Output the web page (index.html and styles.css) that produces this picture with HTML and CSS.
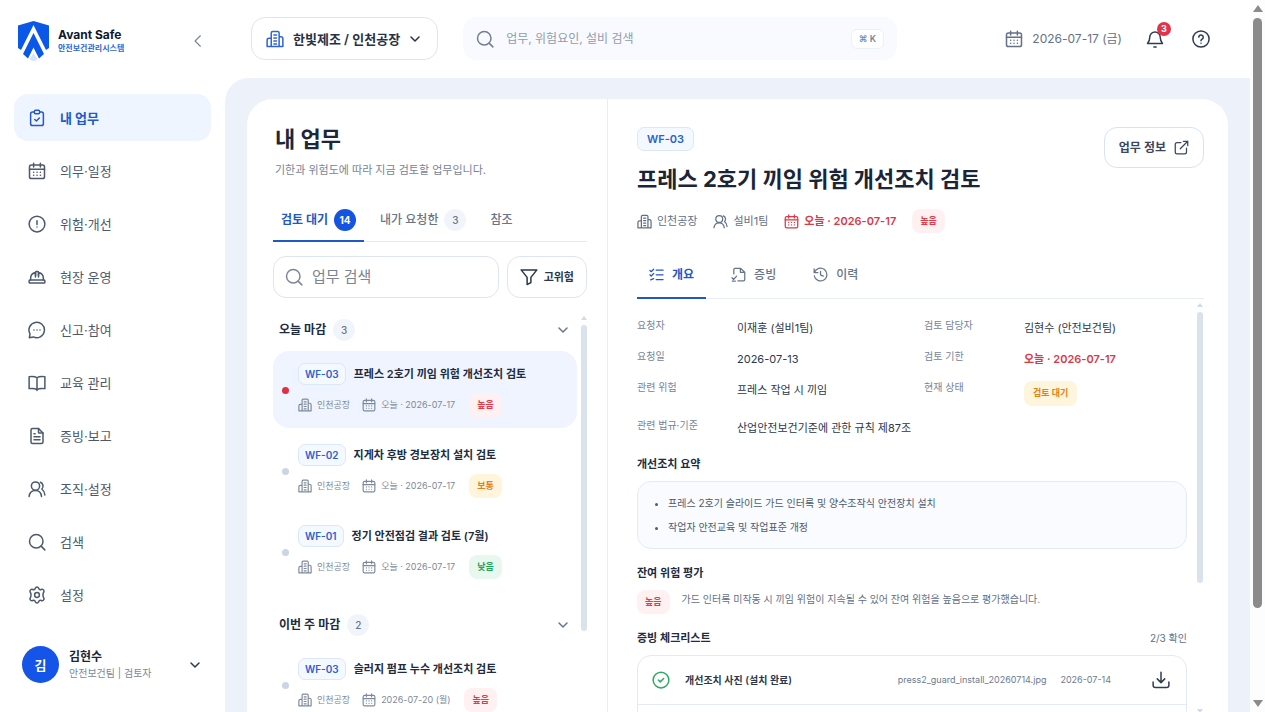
FILE: index.html
```html
<!DOCTYPE html>
<html lang="ko">
<head>
    <meta charset="UTF-8">
    <meta name="viewport" content="width=device-width, initial-scale=1.0">
    <title>Avant Safe - 내 업무</title>
    <link rel="stylesheet" href="styles.css">
</head>
<body>

    <!-- icon set -->
    <svg class="sprite" aria-hidden="true">
        <symbol id="i-clipboard" viewBox="0 0 24 24"><path d="M8.500 4H6a2.500 2.500 0 0 0-2.500 2.500v13A2.500 2.500 0 0 0 6 22h12a2.500 2.500 0 0 0 2.500-2.500v-13A2.500 2.500 0 0 0 18 4h-2.500"/><rect x="8.500" y="1.800" width="7" height="4.500" rx="1.500"/><path d="M9 14l2.200 2 4-4"/></symbol>
        <symbol id="i-calendar" viewBox="0 0 24 24"><rect x="2" y="4" width="20" height="18" rx="2.500"/><path d="M7.500 1.500v5M16.500 1.500v5M2 9.500h20"/><path d="M7.500 13.500h.1M12 13.500h.1M16.500 13.500h.1M7.500 17.500h.1M12 17.500h.1M16.500 17.500h.1"/></symbol>
        <symbol id="i-alert" viewBox="0 0 24 24"><circle cx="12" cy="12" r="10.500"/><path d="M12 7.500v5M12 16h.01"/></symbol>
        <symbol id="i-helmet" viewBox="0 0 24 24"><path d="M3.500 16v-2a8 8 0 0 1 6.500-8v6M14 12V6a8 8 0 0 1 6.500 8v2"/><path d="M10 10V5.500a1 1 0 0 1 1-1h2a1 1 0 0 1 1 1V10"/><rect x="1.500" y="16" width="21" height="4" rx="1"/></symbol>
        <symbol id="i-message" viewBox="0 0 24 24"><path d="M1.800 22.200l.9-5A10.300 10.300 0 1 1 7 21.200z"/><path d="M8 12h.01M12 12h.01M16 12h.01"/></symbol>
        <symbol id="i-book" viewBox="0 0 24 24"><path d="M12 5C9.500 3 6 3 1.500 3.500V19.500c4.500-.5 8-.5 10.500 1.500 2.500-2 6-2 10.500-1.500V3.500C18 3 14.500 3 12 5zM12 5v17"/></symbol>
        <symbol id="i-file" viewBox="0 0 24 24"><path d="M14 2v5a1 1 0 0 0 1 1h5"/><path d="M18 22H6a2 2 0 0 1-2-2V4a2 2 0 0 1 2-2h8l6 6v12a2 2 0 0 1-2 2zM8 9h1.500M8 13h8M8 17h8"/></symbol>
        <symbol id="i-users" viewBox="0 0 24 24"><circle cx="10" cy="8" r="5.500"/><path d="M1.500 22c.5-5 4-8 8.500-8s7.500 3 8 8M16.500 3a5.500 5.500 0 0 1 2 9c2.500 2 3.800 4.500 4 8"/></symbol>
        <symbol id="i-search" viewBox="0 0 24 24"><circle cx="11" cy="11" r="9"/><path d="M22.500 22.500L17.500 17.500"/></symbol>
        <symbol id="i-gear" viewBox="0 0 24 24"><path d="M9.800 2.900c.7-2 3.700-2 4.400 0 .5 1.700 1.900 2.400 3.500 1.700 2.100-.9 4 .9 3.600 2.800-.2.800-.9 1.400-1 2.300-.4 1.500-.4 3.100 0 4.600.1.900.8 1.500 1 2.300.4 1.900-1.500 3.700-3.600 2.800-1.600-.7-3 0-3.500 1.700-.7 2-3.700 2-4.400 0-.5-1.700-1.900-2.400-3.500-1.700-2.100.9-4-.9-3.600-2.800.2-.8.900-1.400 1-2.300.4-1.500.4-3.100 0-4.600-.1-.9-.8-1.500-1-2.300-.4-1.900 1.500-3.700 3.600-2.800 1.600.7 3 0 3.500-1.700z"/><circle cx="12" cy="12" r="3.200"/></symbol>
        <symbol id="i-down" viewBox="0 0 24 24"><path d="M4 8l8 8 8-8"/></symbol>
        <symbol id="i-left" viewBox="0 0 24 24"><path d="M16 3l-9 9 9 9"/></symbol>
        <symbol id="i-building" viewBox="0 0 24 24"><path d="M7 22V4a2 2 0 0 1 2-2h6.500a2 2 0 0 1 2 2v18M7 11H4a2.500 2.500 0 0 0-2.500 2.500V22h21V11.500A2.500 2.500 0 0 0 20 9h-2.500M10.500 6.500h3.500M10.500 10.500h3.500M10.500 14.500h3.500M10.500 18.500h3.500"/></symbol>
        <symbol id="i-bell" viewBox="0 0 24 24"><path d="M12 2.500a7 7 0 0 0-7 7c0 4-1 6-3 8.500h20c-2-2.500-3-4.500-3-8.500a7 7 0 0 0-7-7zM10.500 22.500h3"/></symbol>
        <symbol id="i-help" viewBox="0 0 24 24"><circle cx="12" cy="12" r="10.800"/><path d="M9 9.500a3 3 0 1 1 4.500 2.800c-1 .6-1.500 1-1.500 2M12 17.500h.01"/></symbol>
        <symbol id="i-filter" viewBox="0 0 24 24"><path d="M1.500 2.500h21L14.500 12.500v7l-5 2.500v-9.500z"/></symbol>
        <symbol id="i-open" viewBox="0 0 24 24"><path d="M11 4H5a3 3 0 0 0-3 3v12a3 3 0 0 0 3 3h12a3 3 0 0 0 3-3v-6M10 14L22 2M15 2h7v7"/></symbol>
        <symbol id="i-checks" viewBox="0 0 24 24"><path d="M1.500 5.500l2 2 4-4M1.500 12.500l2 2 4-4M2.500 20.500l5-2M11.500 5h11M11.500 12.500h11M11.500 20h11"/></symbol>
        <symbol id="i-evidence" viewBox="0 0 24 24"><path d="M4.500 11V4a2 2 0 0 1 2-2H15l7 6.500V20a2 2 0 0 1-2 2h-9M15 2v6.500h7M1.500 17l2.500 3 5-5.500"/><path d="M2 22.500h5"/></symbol>
        <symbol id="i-history" viewBox="0 0 24 24"><path d="M12 7v5.500l4.500 2M1.800 3v6h6M2.300 9a10.200 10.200 0 1 1-.3 5"/></symbol>
        <symbol id="i-done" viewBox="0 0 24 24"><circle cx="12" cy="12" r="10.500"/><path d="M8.500 12l2.500 2.500 4.500-4.500"/></symbol>
        <symbol id="i-download" viewBox="0 0 24 24"><path d="M12 1.500V15M7 10.500l5 5 5-5M1.500 14.500V19a3 3 0 0 0 3 3h15a3 3 0 0 0 3-3v-4.500"/></symbol>
    </svg>

    <div class="app">
        <aside class="sidebar">
            <div class="brand">
                <svg class="brand-logo" viewBox="0 0 31 41">
                    <path fill="#0b57e8" d="M0 4.500L15.500 0 31 4.500V27l-3 2L15.500 4 3 29l-3-2z"/>
                    <path fill="#0b57e8" d="M15.500 12L26 33l-5 4.500-5.500-11-5.500 11L5 33z"/>
                    <path fill="#d5e3fc" d="M15.500 32l4 6-4 2.500-4-2.500z"/>
                </svg>
                <div class="brand-text">
                    <strong>Avant Safe</strong>
                    <span>안전보건관리시스템</span>
                </div>
                <button class="collapse" aria-label="메뉴 접기"><svg class="icon"><use href="#i-left"/></svg></button>
            </div>

            <nav class="menu">
                <a href="#" class="active"><svg class="icon"><use href="#i-clipboard"/></svg>내 업무</a>
                <a href="#"><svg class="icon"><use href="#i-calendar"/></svg>의무·일정</a>
                <a href="#"><svg class="icon"><use href="#i-alert"/></svg>위험·개선</a>
                <a href="#"><svg class="icon"><use href="#i-helmet"/></svg>현장 운영</a>
                <a href="#"><svg class="icon"><use href="#i-message"/></svg>신고·참여</a>
                <a href="#"><svg class="icon"><use href="#i-book"/></svg>교육 관리</a>
                <a href="#"><svg class="icon"><use href="#i-file"/></svg>증빙·보고</a>
                <a href="#"><svg class="icon"><use href="#i-users"/></svg>조직·설정</a>
                <a href="#"><svg class="icon"><use href="#i-search"/></svg>검색</a>
                <a href="#"><svg class="icon"><use href="#i-gear"/></svg>설정</a>
            </nav>

            <button class="user">
                <span class="avatar">김</span>
                <span class="user-text"><strong>김현수</strong><span>안전보건팀 | 검토자</span></span>
                <svg class="icon small"><use href="#i-down"/></svg>
            </button>
        </aside>

        <div class="main">
            <header class="topbar">
                <button class="site">
                    <svg class="icon"><use href="#i-building"/></svg>
                    한빛제조 / 인천공장
                    <svg class="icon small"><use href="#i-down"/></svg>
                </button>
                <label class="global-search">
                    <svg class="icon"><use href="#i-search"/></svg>
                    <input type="text" placeholder="업무, 위험요인, 설비 검색" aria-label="전체 검색">
                    <kbd>⌘ K</kbd>
                </label>
                <div class="top-actions">
                    <span class="today"><svg class="icon"><use href="#i-calendar"/></svg>2026-07-17 (금)</span>
                    <button class="icon-btn" aria-label="알림"><svg class="icon"><use href="#i-bell"/></svg><span class="count">3</span></button>
                    <button class="icon-btn" aria-label="도움말"><svg class="icon"><use href="#i-help"/></svg></button>
                </div>
            </header>

            <main class="workspace">
                <div class="card">
                    <section class="list-panel">
                        <h1>내 업무</h1>
                        <p class="subtitle">기한과 위험도에 따라 지금 검토할 업무입니다.</p>

                        <div class="tabs">
                            <button class="active">검토 대기<span class="pill">14</span></button>
                            <button>내가 요청한<span class="pill">3</span></button>
                            <button>참조</button>
                        </div>

                        <div class="filters">
                            <label class="task-search">
                                <svg class="icon"><use href="#i-search"/></svg>
                                <input type="text" placeholder="업무 검색" aria-label="업무 검색">
                            </label>
                            <button class="filter-btn"><svg class="icon"><use href="#i-filter"/></svg>고위험</button>
                        </div>

                        <div class="scroll-area">
                            <div class="task-list">
                                <button class="group">오늘 마감<span class="pill">3</span><svg class="icon small"><use href="#i-down"/></svg></button>
                                <a href="#" class="task selected">
                                    <span class="task-title"><span class="code">WF-03</span>프레스 2호기 끼임 위험 개선조치 검토</span>
                                    <span class="task-meta"><svg class="icon mini"><use href="#i-building"/></svg><span class="place">인천공장</span><svg class="icon mini"><use href="#i-calendar"/></svg><span class="due">오늘 · 2026-07-17</span><span class="chip high">높음</span></span>
                                </a>
                                <a href="#" class="task">
                                    <span class="task-title"><span class="code">WF-02</span>지게차 후방 경보장치 설치 검토</span>
                                    <span class="task-meta"><svg class="icon mini"><use href="#i-building"/></svg><span class="place">인천공장</span><svg class="icon mini"><use href="#i-calendar"/></svg><span class="due">오늘 · 2026-07-17</span><span class="chip mid">보통</span></span>
                                </a>
                                <a href="#" class="task">
                                    <span class="task-title"><span class="code">WF-01</span>정기 안전점검 결과 검토 (7월)</span>
                                    <span class="task-meta"><svg class="icon mini"><use href="#i-building"/></svg><span class="place">인천공장</span><svg class="icon mini"><use href="#i-calendar"/></svg><span class="due">오늘 · 2026-07-17</span><span class="chip low">낮음</span></span>
                                </a>

                                <button class="group">이번 주 마감<span class="pill">2</span><svg class="icon small"><use href="#i-down"/></svg></button>
                                <a href="#" class="task">
                                    <span class="task-title"><span class="code">WF-03</span>슬러지 펌프 누수 개선조치 검토</span>
                                    <span class="task-meta"><svg class="icon mini"><use href="#i-building"/></svg><span class="place">인천공장</span><svg class="icon mini"><use href="#i-calendar"/></svg><span class="due">2026-07-20 (월)</span><span class="chip high">높음</span></span>
                                </a>
                            </div>
                            <div class="scrollbar"><i class="arrow-up"></i><i class="thumb"></i><i class="arrow-down"></i></div>
                        </div>
                    </section>

                    <section class="detail-panel">
                        <div class="detail-head">
                            <div>
                                <span class="code large">WF-03</span>
                                <h2>프레스 2호기 끼임 위험 개선조치 검토</h2>
                            </div>
                            <button class="info-btn">업무 정보<svg class="icon"><use href="#i-open"/></svg></button>
                        </div>
                        <div class="detail-meta">
                            <span><svg class="icon"><use href="#i-building"/></svg>인천공장</span>
                            <span><svg class="icon"><use href="#i-users"/></svg>설비1팀</span>
                            <span class="overdue"><svg class="icon"><use href="#i-calendar"/></svg>오늘 · 2026-07-17</span>
                            <span class="chip high">높음</span>
                        </div>

                        <div class="detail-tabs">
                            <button class="active"><svg class="icon"><use href="#i-checks"/></svg>개요</button>
                            <button><svg class="icon"><use href="#i-evidence"/></svg>증빙</button>
                            <button><svg class="icon"><use href="#i-history"/></svg>이력</button>
                        </div>

                        <div class="scroll-area">
                            <div class="detail-body">
                                <dl class="fields">
                                    <div><dt>요청자</dt><dd>이재훈 (설비1팀)</dd></div>
                                    <div><dt>검토 담당자</dt><dd>김현수 (안전보건팀)</dd></div>
                                    <div><dt>요청일</dt><dd>2026-07-13</dd></div>
                                    <div><dt>검토 기한</dt><dd class="overdue">오늘 · 2026-07-17</dd></div>
                                    <div><dt>관련 위험</dt><dd>프레스 작업 시 끼임</dd></div>
                                    <div><dt>현재 상태</dt><dd><span class="chip mid">검토 대기</span></dd></div>
                                    <div class="wide"><dt>관련 법규·기준</dt><dd>산업안전보건기준에 관한 규칙 제87조</dd></div>
                                </dl>

                                <h3>개선조치 요약</h3>
                                <ul class="summary">
                                    <li>프레스 2호기 슬라이드 가드 인터록 및 양수조작식 안전장치 설치</li>
                                    <li>작업자 안전교육 및 작업표준 개정</li>
                                </ul>

                                <h3>잔여 위험 평가</h3>
                                <div class="residual">
                                    <span class="chip high">높음</span>
                                    <p>가드 인터록 미작동 시 끼임 위험이 지속될 수 있어 잔여 위험을 높음으로 평가했습니다.</p>
                                </div>

                                <div class="checklist-head"><h3>증빙 체크리스트</h3><span>2/3 확인</span></div>
                                <ul class="checklist">
                                    <li>
                                        <svg class="icon done"><use href="#i-done"/></svg>
                                        <strong>개선조치 사진 (설치 완료)</strong>
                                        <span class="file-name">press2_guard_install_20260714.jpg</span>
                                        <span class="file-date">2026-07-14</span>
                                        <button class="icon-btn" aria-label="다운로드"><svg class="icon"><use href="#i-download"/></svg></button>
                                    </li>
                                    <li></li>
                                </ul>
                            </div>
                            <div class="scrollbar"><i class="arrow-up"></i><i class="thumb"></i><i class="arrow-down"></i></div>
                        </div>
                    </section>
                </div>
            </main>
        </div>

        <div class="page-scrollbar"><i class="arrow-up"></i><i class="thumb"></i><i class="arrow-down"></i></div>
    </div>

</body>
</html>
```

FILE: styles.css
```css
* {
    box-sizing: border-box;
}

body {
    margin: 0;
    font-family: Inter, 'Noto Sans CJK KR', sans-serif;
    font-size: 11px;
    line-height: 16px;
    color: #2c374b;
    background-color: #fff;
}

h1, h2, h3, p, ul, dl, dd {
    margin: 0;
    padding: 0;
}

a {
    color: inherit;
    text-decoration: none;
}

button, input {
    font: inherit;
    color: inherit;
    background: none;
    border: none;
    padding: 0;
}

button {
    cursor: pointer;
}

input {
    flex: 1;
    min-width: 0;
    outline: none;
}

.sprite {
    display: none;
}

.icon {
    width: 18px;
    height: 18px;
    flex: none;
    fill: none;
    stroke: currentColor;
    stroke-width: 2;
    stroke-linecap: round;
    stroke-linejoin: round;
}

.icon.small {
    width: 12px;
    height: 12px;
    stroke-width: 3;
}

.icon.mini {
    width: 14px;
    height: 14px;
}

.app {
    display: flex;
    height: 100vh;
    overflow: hidden;
}

/* Sidebar */
.sidebar {
    width: 225px;
    flex: none;
    padding: 0 14px;
}

.brand {
    display: flex;
    align-items: center;
    height: 94px;
    padding: 0 6px 12px 4px;
}

.brand-logo {
    width: 31px;
    height: 41px;
    margin-right: 9px;
}

.brand-text strong,
.brand-text span {
    display: block;
}

.brand-text strong {
    font-size: 12px;
    line-height: 14px;
    color: #0d1830;
}

.brand-text span {
    font-size: 8px;
    line-height: 12px;
    font-weight: 700;
    color: #2a66dd;
}

.collapse {
    display: flex;
    margin-left: auto;
    color: #7b8494;
}

.collapse .icon {
    width: 14px;
    height: 14px;
}

.menu {
    display: flex;
    flex-direction: column;
    gap: 6px;
}

.menu a {
    display: flex;
    align-items: center;
    gap: 14px;
    height: 47px;
    padding: 0 14px;
    border-radius: 14px;
    font-size: 13px;
    color: #4c586c;
}

.menu a.active {
    background-color: #eff5ff;
    color: #2257cd;
    font-weight: 700;
}

.user {
    display: flex;
    align-items: center;
    width: 100%;
    margin-top: 28px;
    padding: 0 10px 0 8px;
    text-align: left;
}

.avatar {
    display: flex;
    align-items: center;
    justify-content: center;
    width: 37px;
    height: 37px;
    margin-right: 10px;
    border-radius: 50%;
    background-color: #1454e8;
    color: #fff;
    font-size: 13px;
    font-weight: 700;
}

.user-text {
    flex: 1;
    font-size: 10px;
    color: #7b8798;
}

.user-text strong {
    display: block;
    font-size: 12px;
    color: #1c2638;
}

/* Top bar */
.main {
    flex: 1;
    min-width: 0;
    display: flex;
    flex-direction: column;
    height: 116vh;
}

.topbar {
    display: flex;
    align-items: center;
    flex: none;
    height: 78px;
    padding: 0 40px 1px 26px;
}

.site {
    display: flex;
    align-items: center;
    gap: 9px;
    height: 43px;
    padding: 0 16px 0 14px;
    margin-right: 25px;
    border: 1px solid #dfe5ee;
    border-radius: 14px;
    font-size: 13px;
    font-weight: 600;
    color: #263146;
    white-space: nowrap;
}

.site .icon:first-child {
    color: #2f63d8;
}

.global-search {
    display: flex;
    align-items: center;
    flex: 0 1 434px;
    gap: 12px;
    height: 43px;
    padding: 0 13px;
    border-radius: 14px;
    background-color: #f8faff;
    color: #727e90;
    font-size: 12px;
}

.global-search ::placeholder {
    color: #929cad;
}

kbd {
    height: 20px;
    padding: 0 7px;
    border: 1px solid #edf0f5;
    border-radius: 6px;
    background-color: #fff;
    font-family: Inter, 'Noto Sans CJK KR', sans-serif;
    font-size: 9px;
    line-height: 18px;
    font-weight: 600;
    color: #7a8494;
}

.top-actions {
    display: flex;
    align-items: center;
    gap: 24px;
    margin-left: auto;
}

.today {
    display: flex;
    align-items: center;
    gap: 9px;
    font-size: 12px;
    color: #657186;
    white-space: nowrap;
}

.icon-btn {
    position: relative;
    display: flex;
    color: #303c50;
}

.top-actions .icon-btn + .icon-btn {
    margin-left: 4px;
}

.count {
    position: absolute;
    top: -8px;
    right: -7px;
    width: 14px;
    height: 14px;
    border-radius: 50%;
    background-color: #e4324b;
    color: #fff;
    font-size: 9px;
    line-height: 14px;
    font-weight: 700;
}

/* Card */
.workspace {
    flex: 1;
    min-height: 0;
    padding: 21px 22px 22px;
    border-top-left-radius: 24px;
    background-color: #edf1fa;
}

.card {
    display: flex;
    height: 100%;
    border-radius: 26px;
    background-color: #fff;
}

.list-panel {
    display: flex;
    flex-direction: column;
    width: 361px;
    flex: none;
    padding: 26px 20px 24px 26px;
    border-right: 1px solid #e8edf5;
}

h1 {
    padding-left: 2px;
    font-size: 22px;
    line-height: 28px;
    font-weight: 700;
    color: #1d273a;
}

.subtitle {
    margin-top: 9px;
    padding-left: 2px;
    color: #77839a;
}

.tabs {
    display: flex;
    gap: 8px;
    margin-top: 18px;
    border-bottom: 1px solid #e5eaf2;
    font-size: 12px;
    color: #68758a;
}

.tabs button {
    display: flex;
    align-items: center;
    gap: 6px;
    height: 46px;
    padding: 3px 8px 0;
    margin-bottom: -1px;
    border-bottom: 2px solid transparent;
    font-weight: 500;
}

.tabs .active,
.detail-tabs .active {
    border-color: #2257c8;
    color: #2257c8;
    font-weight: 700;
}

.pill {
    min-width: 22px;
    height: 22px;
    border-radius: 11px;
    background-color: #f1f5fb;
    color: #68758a;
    font-size: 10px;
    line-height: 22px;
    font-weight: 500;
    text-align: center;
}

.tabs .active .pill {
    background-color: #1454e0;
    color: #fff;
    font-weight: 700;
}

.filters {
    display: flex;
    gap: 8px;
    margin: 14px 0 11px;
}

.task-search {
    display: flex;
    align-items: center;
    flex: 1;
    min-width: 0;
    gap: 9px;
    height: 42px;
    padding: 0 11px;
    border: 1px solid #dfe5ee;
    border-radius: 13px;
    font-size: 15px;
    color: #7b8798;
}

.task-search ::placeholder {
    color: #7c8593;
}

.filter-btn {
    display: flex;
    align-items: center;
    gap: 6px;
    height: 42px;
    padding: 0 12px;
    border: 1px solid #dfe5ee;
    border-radius: 13px;
    font-weight: 600;
    white-space: nowrap;
}

.scroll-area {
    display: flex;
    flex: 1;
    min-height: 0;
    overflow: hidden;
}

.task-list {
    flex: 1;
    min-width: 0;
}

.group {
    display: flex;
    align-items: center;
    gap: 7px;
    width: 100%;
    height: 42px;
    padding: 0 8px 0 6px;
    font-size: 12px;
    font-weight: 600;
    color: #202b3e;
}

.task + .group {
    margin-top: 14px;
}

.group .icon {
    margin-left: auto;
    color: #68758a;
}

.task {
    position: relative;
    display: flex;
    flex-direction: column;
    height: 77px;
    padding: 12px 12px 0 25px;
    border-radius: 16px;
}

.task + .task {
    margin-top: 4px;
}

.task::before {
    content: "";
    position: absolute;
    left: 9px;
    top: 36px;
    width: 7px;
    height: 7px;
    border-radius: 50%;
    background-color: #ccd5e3;
}

.task.selected {
    background-color: #eff4fe;
}

.task.selected::before {
    background-color: #e02f43;
}

.task-title {
    display: flex;
    align-items: center;
    gap: 8px;
    font-weight: 600;
    color: #202b3e;
    white-space: nowrap;
}

.code {
    display: inline-block;
    height: 22px;
    padding: 0 6px;
    border: 1px solid #dce8f8;
    border-radius: 7px;
    background-color: #f4f8ff;
    color: #2c60cf;
    font-size: 10px;
    line-height: 20px;
    font-weight: 600;
}

.code.large {
    height: 24px;
    padding: 0 9px;
    font-size: 11px;
    line-height: 22px;
}

.task-meta {
    display: flex;
    align-items: center;
    gap: 5px;
    margin-top: 8px;
    font-size: 9px;
    color: #7d899b;
    white-space: nowrap;
}

.place {
    margin-right: 7px;
}

.due {
    margin-right: 9px;
}

.chip {
    display: inline-block;
    height: 24px;
    padding: 0 8px;
    border-radius: 8px;
    font-size: 9px;
    line-height: 24px;
    font-weight: 700;
    white-space: nowrap;
}

.chip.high {
    background-color: #fff0f1;
    color: #e63848;
}

.chip.mid {
    background-color: #fff5dc;
    color: #e2801a;
}

.chip.low {
    background-color: #e9f8ef;
    color: #22a35a;
}

/* Detail */
.detail-panel {
    display: flex;
    flex-direction: column;
    flex: 1;
    min-width: 0;
    padding: 28px 24px 91px 29px;
}

.detail-head {
    display: flex;
    justify-content: space-between;
    align-items: flex-start;
}

h2 {
    margin-top: 12px;
    font-size: 22px;
    line-height: 32px;
    font-weight: 700;
    color: #1b2538;
}

.info-btn {
    display: flex;
    align-items: center;
    gap: 8px;
    height: 41px;
    padding: 0 14px;
    border: 1px solid #d8e3f2;
    border-radius: 13px;
    font-size: 12px;
    font-weight: 600;
    color: #3a475c;
    white-space: nowrap;
}

.info-btn .icon,
.detail-meta .icon,
.detail-tabs .icon {
    width: 15px;
    height: 15px;
}

.detail-meta {
    display: flex;
    align-items: center;
    gap: 16px;
    margin-top: 14px;
    color: #617088;
}

.detail-meta span {
    display: flex;
    align-items: center;
    gap: 5px;
}

.overdue,
.detail-meta .overdue {
    color: #dc3845;
    font-weight: 600;
}

.detail-tabs {
    display: flex;
    gap: 13px;
    margin-top: 15px;
    border-bottom: 1px solid #e8edf4;
    font-size: 12px;
    color: #68758a;
}

.detail-tabs button {
    display: flex;
    align-items: center;
    gap: 8px;
    height: 51px;
    padding: 4px 12px 0;
    margin-bottom: -1px;
    border-bottom: 2px solid transparent;
    font-weight: 500;
}

.detail-body {
    flex: 1;
    min-width: 0;
    padding-top: 20px;
}

.fields {
    display: grid;
    grid-template-columns: 1fr 1fr;
    gap: 13px 24px;
    margin-bottom: 19px;
}

.fields div {
    display: grid;
    grid-template-columns: 100px 1fr;
    min-height: 18px;
}

.fields .wide {
    grid-column: 1 / -1;
}

dt {
    font-size: 10px;
    line-height: 12px;
    color: #77839a;
}

dd {
    line-height: 18px;
}

dd .chip {
    display: block;
    width: fit-content;
    height: 25px;
    padding: 0 9px;
}

h3 {
    font-size: 11px;
    line-height: 16px;
    font-weight: 600;
    color: #202b3e;
}

.summary {
    margin: 9px 0 16px;
    padding: 9px 12px 9px 30px;
    border: 1px solid #e4ebf6;
    border-radius: 14px;
    background-color: #f9fbff;
    font-size: 10px;
    line-height: 24px;
    color: #4c5a70;
}

.residual {
    display: flex;
    gap: 12px;
    margin: 9px 0 16px;
    font-size: 10px;
    line-height: 18px;
    color: #627087;
}

.checklist-head {
    display: flex;
    justify-content: space-between;
    align-items: flex-end;
    font-size: 10px;
    color: #627087;
}

.checklist {
    margin-top: 9px;
    border: 1px solid #e4eaf3;
    border-radius: 14px;
    list-style: none;
}

.checklist li {
    display: flex;
    align-items: center;
    height: 48px;
    padding: 0 16px 0 14px;
    font-size: 10px;
    color: #6d7a90;
}

.checklist li + li {
    border-top: 1px solid #e4eaf3;
}

.checklist strong {
    margin-left: 15px;
    font-weight: 600;
    color: #2c374b;
}

.done {
    color: #2fa866;
}

.file-name {
    margin-left: auto;
}

.file-name,
.file-date {
    font-size: 9px;
}

.file-date {
    margin: 0 41px 0 14px;
}

/* Scrollbars */
.scrollbar {
    display: flex;
    flex-direction: column;
    align-items: center;
    width: 6px;
    flex: none;
    margin: 7px 0 0 4px;
}

.detail-panel .scrollbar {
    margin: 4px 1px 0 10px;
}

.arrow-up,
.arrow-down {
    border: 3px solid transparent;
}

.scrollbar .arrow-up {
    border-top: 0;
    border-bottom: 4px solid #d3dae5;
    margin-bottom: 5px;
}

.scrollbar .arrow-down {
    border-bottom: 0;
    border-top: 4px solid #d3dae5;
    margin-top: auto;
}

.scrollbar .thumb {
    width: 6px;
    height: 66%;
    border-radius: 3px;
    background-color: #dae2ee;
}

.page-scrollbar {
    display: flex;
    flex-direction: column;
    align-items: center;
    width: 15px;
    flex: none;
    padding: 5px 0;
    background-color: #fdfdfd;
}

.page-scrollbar .thumb {
    width: 9px;
    height: 84%;
    margin-top: 6px;
    border-radius: 5px;
    background-color: #8b8b8b;
}

.page-scrollbar .arrow-up {
    border: 5px solid transparent;
    border-top: 0;
    border-bottom: 7px solid #8b8b8b;
}

.page-scrollbar .arrow-down {
    margin-top: auto;
    border: 5px solid transparent;
    border-bottom: 0;
    border-top: 7px solid #8b8b8b;
}
```
